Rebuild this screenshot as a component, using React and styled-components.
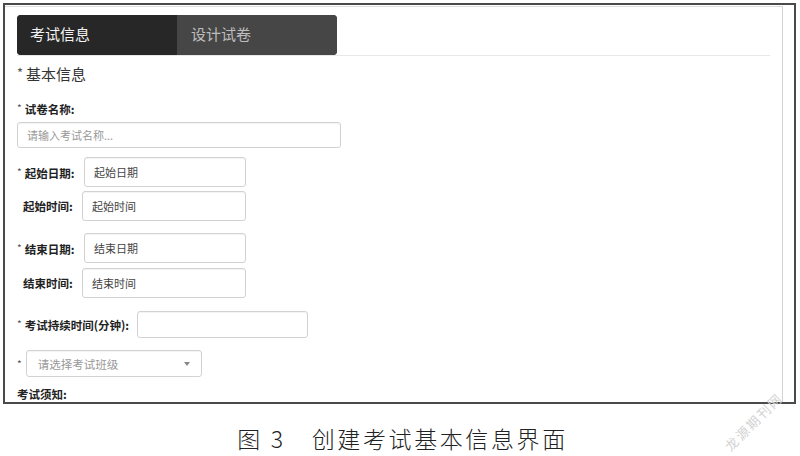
import React from "react";
import styled, { createGlobalStyle } from "styled-components";

const Global = createGlobalStyle`
  body {
    margin: 0;
    background: #fff;
    font-family: "Noto Sans CJK SC", "Noto Sans", sans-serif;
    color: #333;
  }
`;

const Page = styled.div`
  position: relative;
  width: 800px;
  height: 456px;
  padding: 3px 0 0 3px;
  box-sizing: border-box;
  overflow: hidden;
`;

const Frame = styled.div`
  width: 793px;
  height: 401px;
  box-sizing: border-box;
  border: 2px solid #4a4a4a;
  padding: 1px 11px 0 0;
  overflow: hidden;
`;

const Panel = styled.div`
  height: 100%;
  box-sizing: border-box;
  border-top: 1px solid #dcdcdc;
  border-right: 1px solid #d4d4d4;
  padding: 8px 12px 0 12px;
  display: flex;
  flex-direction: column;
`;

const Header = styled.div`
  display: flex;
  border-bottom: 1px solid #e8e8e8;
`;

const Tabs = styled.div`
  display: flex;
  width: 320px;
  height: 40px;
  border-radius: 4px;
  overflow: hidden;
  background: #474747;
`;

const Tab = styled.div`
  width: 160px;
  display: flex;
  align-items: center;
  padding: 0 0 4px ${p => (p.$active ? "13px" : "14px")};
  box-sizing: border-box;
  font-size: 15px;
  background: ${p => (p.$active ? "#272727" : "#464646")};
  color: ${p => (p.$active ? "#f2f2f2" : "#bdbdbd")};
`;

const SectionTitle = styled.div`
  margin-top: 7px;
  font-size: 15px;
  line-height: 20px;
  color: #333;
`;

const Star = styled.span`
  font-size: ${p => (p.$big ? "13px" : "10px")};
  font-weight: normal;
  color: #555;
  margin-right: ${p => (p.$gap ?? 3)}px;
  vertical-align: ${p => (p.$big ? "2px" : "2px")};
`;

const Label = styled.div`
  font-size: 11.5px;
  font-weight: bold;
  line-height: 16px;
  color: #222;
  margin-top: ${p => p.$top || 0}px;
  white-space: nowrap;
`;

const TextInput = styled.div`
  box-sizing: border-box;
  width: ${p => p.$w}px;
  height: ${p => p.$h || 30}px;
  border: 1px solid #d2d2d2;
  border-radius: 3px;
  box-shadow: inset 0 1px 1px rgba(0, 0, 0, 0.05);
  display: flex;
  align-items: center;
  padding-left: ${p => p.$pad || 9}px;
  font-size: 11px;
  color: ${p => (p.$muted ? "#999" : "#444")};
  margin-top: ${p => p.$top || 0}px;
`;

const Row = styled.div`
  display: flex;
  align-items: center;
  margin-top: ${p => p.$top}px;
`;

const RowLabel = styled(Label)`
  width: ${p => p.$w}px;
  padding-left: ${p => p.$indent || 0}px;
  box-sizing: border-box;
`;

const Select = styled(TextInput)`
  justify-content: space-between;
  padding-right: 11px;
  font-size: 11.5px;
`;

const Caret = styled.span`
  width: 0;
  height: 0;
  border-left: 3px solid transparent;
  border-right: 3px solid transparent;
  border-top: 4px solid #888;
`;

const Caption = styled.div`
  text-align: center;
  margin-top: 19px;
  line-height: 30px;
  font-size: 23px;
  letter-spacing: 2.6px;
  color: #222;
  font-weight: 300;
  padding-left: 2px;
`;

const Num = styled.span`
  margin: 0 26px 0 8px;
`;

const Watermark = styled.div`
  position: absolute;
  left: 716px;
  top: 412px;
  transform: rotate(-45deg);
  font-size: 13px;
  color: #d2d2d2;
  letter-spacing: 2px;
`;

export default function App() {
  return (
    <Page>
      <Global />
      <Frame>
        <Panel>
          <Header>
            <Tabs>
              <Tab $active>考试信息</Tab>
              <Tab>设计试卷</Tab>
            </Tabs>
          </Header>
          <SectionTitle>
            <Star $big>*</Star>基本信息
          </SectionTitle>
          <Label $top={16}>
            <Star>*</Star>试卷名称:
          </Label>
          <TextInput $w={324} $h={26} $top={5} $muted>
            请输入考试名称...
          </TextInput>
          <Row $top={9}>
            <RowLabel $w={67}>
              <Star>*</Star>起始日期:
            </RowLabel>
            <TextInput $w={162}>起始日期</TextInput>
          </Row>
          <Row $top={4}>
            <RowLabel $w={65} $indent={6}>起始时间:</RowLabel>
            <TextInput $w={164}>起始时间</TextInput>
          </Row>
          <Row $top={12}>
            <RowLabel $w={67}>
              <Star>*</Star>结束日期:
            </RowLabel>
            <TextInput $w={162}>结束日期</TextInput>
          </Row>
          <Row $top={5}>
            <RowLabel $w={65} $indent={6}>结束时间:</RowLabel>
            <TextInput $w={164}>结束时间</TextInput>
          </Row>
          <Row $top={13}>
            <RowLabel $w={120}>
              <Star>*</Star>考试持续时间(分钟):
            </RowLabel>
            <TextInput $w={171} $h={27} />
          </Row>
          <Row $top={12}>
            <Star $gap={4}>*</Star>
            <Select $w={176} $h={27} $pad={11} $muted>
              请选择考试班级
              <Caret />
            </Select>
          </Row>
          <Label $top={9}>考试须知:</Label>
        </Panel>
      </Frame>
      <Caption>
        图<Num>3</Num>创建考试基本信息界面
      </Caption>
      <Watermark>龙源期刊网</Watermark>
    </Page>
  );
}
